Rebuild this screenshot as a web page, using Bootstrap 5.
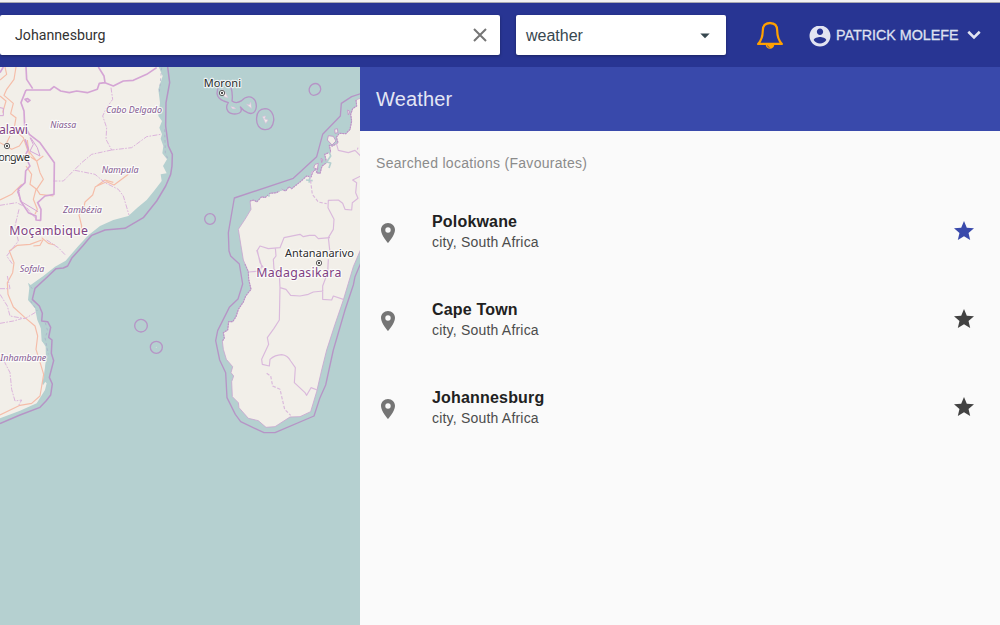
<!DOCTYPE html>
<html lang="en">
<head>
<meta charset="utf-8">
<meta name="viewport" content="width=device-width, initial-scale=1">
<title>Weather</title>
<link href="https://cdn.jsdelivr.net/npm/bootstrap@5.3.0/dist/css/bootstrap.min.css" rel="stylesheet">
<style>
body{font-family:"Liberation Sans",Arial,sans-serif;background:#fafafa;height:625px}
.top-edge{height:3px;background:#f2f2f2;border-bottom:1px solid #a9a9b0}
.app-bar{height:64px;background:#283593}
.search-box,.type-box{height:40px;background:#fff;border-radius:2px;box-shadow:0 1px 3px rgba(0,0,0,.35)}
.search-box{width:500px;padding:0 12px 0 15px}
.search-box input{font:14.2px Roboto,sans-serif;color:#333;background:none;outline:0;padding:0}
.type-box{width:210px;margin-left:16px;padding:1px 16px 0 10px;font-size:16px;color:#37474f}
.bell{margin-left:30px}
.user-menu{margin-left:25px;color:#dfe1f0;font-size:14.3px;line-height:20px;-webkit-text-stroke:.3px}
.user-name{width:124px;padding-left:1px;white-space:nowrap}
.map-pane{width:360px;height:558px;background:#b5d0d0}
.side-head{height:64px;background:#3949ab;color:#e4e6f4;font-size:20px;letter-spacing:.15px;padding-left:16px}
.side-sub{height:56px;padding:8px 0 0 16px;line-height:48px;font-size:14px;letter-spacing:.29px;color:#8b8b8b}
.place{height:88px;padding:0 24px 0 16px}
.place-pin{margin-top:4px}
.place-text{margin-left:32px;padding-top:1px}
.place-name{font-size:16px;line-height:20px;font-weight:700;letter-spacing:.18px;color:#212121}
.place-kind{font-size:14px;line-height:20px;letter-spacing:.2px;color:#4c4c4c}
.map-pane text{font-family:"Noto Sans",sans-serif;paint-order:stroke;stroke:#fff;stroke-opacity:.75;stroke-width:7px;stroke-linejoin:round}
.region{font-style:italic;font-size:27px;fill:#855a91}
.country{font-size:37px;fill:#803f83}
.town{font-size:33px;fill:#2d2d2d}
</style>
</head>
<body class="overflow-hidden">
<div class="top-edge"></div>
<nav class="app-bar d-flex align-items-center">
  <div class="search-box d-flex align-items-center">
    <input class="border-0 flex-grow-1" type="text" value="Johannesburg" aria-label="Search">
    <svg width="16" height="16" viewBox="0 0 16 16" stroke="#757575" stroke-width="2"><path d="M2 2l12 12M14 2L2 14"/></svg>
  </div>
  <div class="type-box d-flex align-items-center justify-content-between">
    <span>weather</span>
    <svg width="10" height="6" viewBox="0 0 10 6"><path d="M.3.5h9.400L5 5.200z" fill="#37474f"/></svg>
  </div>
  <svg class="bell" width="28" height="30" viewBox="0 0 28 30"><path d="M14 3.200c-4.500 0-7.200 2.800-7.200 7.300 0 6.500-1 9.500-4.700 13.400h23.800C22.200 20 21.200 17 21.200 10.500c0-4.500-2.700-7.300-7.200-7.300z" fill="none" stroke="#ffa000" stroke-width="2.200" stroke-linejoin="round"/><path d="M12.200 3.500a1.800 1.800 0 1 1 3.600 0zM9.700 24.500h8.600a4.300 4.300 0 0 1-8.600 0z" fill="#ffa000"/><path d="M11.500 25.500c.2 1.100.9 1.800 2 2" fill="none" stroke="#283593" stroke-width=".7"/></svg>
  <div class="user-menu d-flex align-items-center">
    <svg class="mt-1" width="22" height="22" viewBox="1.500 2.500 21 21" fill="#e2e4f1"><path d="M12 2C6.480 2 2 6.480 2 12s4.480 10 10 10 10-4.480 10-10S17.520 2 12 2zm0 3c1.660 0 3 1.340 3 3s-1.340 3-3 3-3-1.340-3-3 1.340-3 3-3zm0 14.200c-2.500 0-4.710-1.280-6-3.220.03-1.990 4-3.080 6-3.080 1.990 0 5.970 1.090 6 3.080-1.290 1.940-3.500 3.220-6 3.220z"/></svg>
    <span class="user-name ms-1">PATRICK MOLEFE</span>
    <svg class="ms-2" width="14" height="10" viewBox="0 0 13 9" fill="none" stroke="#e2e4f1" stroke-width="2.400"><path d="M1.200 1.500l5.300 5.300 5.300-5.300"/></svg>
  </div>
</nav>
<main class="d-flex">
  <section class="map-pane flex-shrink-0">
    <svg class="d-block" width="360" height="558" viewBox="0 3 1080 1674" fill="none" stroke-linejoin="round">
      <!-- mainland -->
      <path fill="#f2efe9" d="M0 0H475L488 30 475 70 480 110 475 150 486 165 478 185 486 205 482 218 490 240 487 262 501 280 489 300 500 322 482 325 485 345 462 375 440 402 412 425 385 450 340 462 300 480 265 508 235 540 197 584 165 602 130 630 92 657 84 650 88 665 84 702 105 727 112 762 125 792 128 827 137 842 138 882 130 942 140 952 135 972 110 1012 60 1034 0 1057Z"/>
      <path fill="#b5d0d0" d="M121 765l14 15-3 38 8 5-7 10-8-8zM136 890l5 50-12 18-3-8 8-22z"/>
      <g stroke="#f5bda9" stroke-width="3.500">
        <path d="M48 3L42 40 20 70 12 88 40 112 32 143 48 155 42 190 70 215 82 250 110 285 130 270M0 90L18 105 8 140M0 230L35 250 58 240 70 222M82 222L88 270 110 285 120 320 130 340 110 370 90 355 95 325 78 300M110 370L120 385 160 390M108 370L100 400 112 430 105 445M0 402L35 385 65 355M15 3l5 22-20 17M30 210l-10 20M130 520l-10 18-20 2"/>
        <path d="M385 325L342 357 320 347 286 362 278 387 255 408 250 430 237 447 245 480 240 502M125 522L90 535 52 538 28 555 42 590 38 620 22 650 24 685 40 723 75 755 105 780 113 810 108 850 122 895 131 925 120 990 95 1012 60 1018 0 1047M340 349L315 342 290 360M125 515l20 17 20 5"/>
      </g>
      <g stroke="#dcb4dc" stroke-width="3" stroke-dasharray="15 4 5 4">
        <path d="M333 65L338 100 320 125 308 150 320 185 318 220 335 252 395 245 440 212 482 205M335 252L275 265 245 290 220 315 190 345 160 345M225 313L285 325 315 350 355 370 370 390 387 447M0 418L50 410 80 425 105 455M57 430L45 480 55 525 20 570 38 595M0 668H30L22 630M0 685L22 720 30 750 75 758 108 738M140 522L175 545 197 568M12 885L30 920 35 970 45 1005 65 1002 55 1020M0 772L40 765 65 758"/>
      </g>
      <g stroke="#d5a5d5" stroke-width="5">
        <path d="M78 3L80 40 98 68M78 72H150L162 62 182 75 208 80 230 75 262 80 292 70 298 52 315 50 340 60 370 45 400 43 440 25 470 5M295 3L312 30 315 50M78 72L63 110 72 135 74 180 88 205 120 230 163 290 162 385 135 390 113 410 123 430 122 463 108 462 108 450 85 440 62 405 54 370 75 350 77 315 90 300 75 270 85 250 75 220M75 100l8 8 7-5-7-5zM0 20l10-17"/>
        <path stroke-width="3" d="M0 125l10 2v22H0M90 215l10 20-10 20 30 15-8-25-20-30M60 372l-8 5 12 30 50 30"/>
      </g>
      <path stroke="#b694c6" stroke-width="4.500" d="M503 3L509 50 498 110 497 180 505 240 517 265 516 300 512 325 497 360 470 405 430 455 375 487 315 492 275 508 248 540 215 577 203 600 190 606 168 608 145 630 105 667 97 700 118 720 127 742 125 765 143 767 152 784 146 814 156 822 154 862 161 884 148 934 157 954 152 987 138 1005 120 1024 60 1047 0 1073"/>
      <path stroke="#a9a9c9" stroke-width="2" stroke-dasharray="8 8" d="M485 5L478 80M494 190l2 70 8 20M92 662l8 10M92 705l20 30M136 770l7 25-8 20 10 50"/>

      <!-- island -->
      <g transform="translate(540 0)">
        <path fill="#f2efe9" stroke="#c9a6d0" stroke-width="2.500" d="M550 85L540 97 528 102 530 120 518 128 512 145 515 165 510 190 498 203 478 202 469 214 474 230 458 240 448 238 452 258 434 265 440 290 426 300 420 322 409 320 414 305 398 318 393 333 380 330 360 348 335 368 327 362 317 375 305 370 290 380 270 382 255 395 245 392 230 408 222 402 210 405 213 430 195 460 175 490 183 540 190 582 205 617 206 640 213 670 197 690 190 708 175 730 168 752 158 767 146 767 143 792 130 800 133 817 127 825 130 850 139 880 158 902 153 920 161 930 155 947 157 992 175 1010 177 1025 205 1057 235 1064 258 1084 285 1082 330 1053 360 1052 392 1037 410 977 425 912 440 852 465 775 490 702 505 652 520 602 550 532Z"/>
        <path stroke="#bb93c6" stroke-width="3.500" stroke-dasharray="5 3" d="M528 102L530 120 518 128 512 145 515 165 510 190 498 203 478 202 469 214 474 230 458 240 448 238 452 258 434 265 440 290 426 300 420 322 409 320 414 305 398 318 393 333 380 330 360 348 335 368 327 362 317 375 305 370 290 380 270 382 255 395 245 392 230 408 222 402 210 405M195 595L205 617 206 640 213 670 197 690 190 708 175 730 168 752 158 767 146 767 143 792 130 800 133 817 127 825"/>
        <path fill="#f2efe9" stroke="#c39ccb" stroke-width="3" d="M445 209l15 2 8 14-12 12-14-15zM464 190l8-2 2 12-9 2zM405 295l10-3-3 18-11-5zM423 277l6 4-4 9zM503 132l7 5-5 10z"/>
        <path stroke="#b5d0d0" stroke-width="5" d="M445 250l7 20-12 18 12 3-5 15M378 342l20 2M390 332l-3 18M295 374l12-3M265 384l3 8"/>
        <path stroke="#dab9dc" stroke-width="3.500" d="M469 232L475 253 505 260 525 253 542 270M542 330L518 342 530 350 527 380 534 397 517 410 515 432 495 430 488 412 475 402 445 403 444 425 462 460 460 490 445 515 450 560M450 515L415 518 405 508 388 508 370 512 360 505 312 515 300 545 265 548 240 540 232 553 240 590 250 605M286 545L288 570 280 580 282 610 298 625 300 665 318 670 332 688 360 690 385 685 400 678 430 675M445 580L443 620 428 660V700L455 702 460 690 490 700M300 665L298 762 282 787 262 815 266 835 245 880 247 895 268 900 270 880Q285 867 305 866 323 868 332 885L346 905 343 950 375 980 380 988 393 965 412 972M230 552L245 600 240 615 206 618M534 245l-2 6"/>
        <path stroke="#dab9dc" stroke-width="3.500" stroke-dasharray="10 5" d="M398 315L390 330 397 385 415 408 440 413M260 922L272 930 278 960 300 970 314 1030 332 1048"/>
        <path stroke="#b694c6" stroke-width="4" d="M542 83L515 92 484 112 481 150 428 205 410 272 340 337 163 396 145 500 147 555 152 570 178 594 188 654 174 699 148 724 113 794 107 824 119 882 137 920 141 995 166 1045 182 1067 252 1100H285L402 1050 420 995 437 957 460 852 495 732 520 657 525 632 542 592"/>
        <!-- archipelago -->
        <path stroke="#b694c6" stroke-width="4" d="M114 62L111 82Q113 98 131 105L145 110Q136 122 143 134C148 145 168 146 178 141Q188 135 181 123C195 141 215 148 224 137Q233 125 226 105C215 85 195 92 185 104Q168 115 156 105Q159 87 153 63M255 128C272 128 283 146 281 164 279 180 270 192 254 191 238 190 228 175 230 155 231 138 241 129 255 128zM397 55C411 48 423 57 422 71 419 87 396 94 390 81 385 72 388 60 397 55z"/>
        <path fill="#f2efe9" stroke="#dfc0df" stroke-width="2" d="M127 70l6 5 11 20-11-3zM153 122l5 6 9 0-5-4zM200 115l14 12-2-18-4 8zM248 152l9 20 7-10-10-3 2-9z"/>
        <circle cx="90" cy="459" r="16" stroke="#b694c6" stroke-width="4"/>
      </g>
      <g stroke="#b694c6" stroke-width="4"><circle cx="423" cy="779" r="19"/><circle cx="469" cy="844" r="18"/></g>
      <circle cx="469" cy="844" r="2" fill="#d7dadd"/>

      <g fill="#fff" stroke="#444" stroke-width="2.500"><circle cx="21" cy="240" r="8"/><circle cx="666" cy="81" r="8"/><circle cx="957" cy="591" r="8"/></g>
      <g fill="#444"><circle cx="21" cy="240" r="3.500"/><circle cx="666" cy="81" r="3.500"/><circle cx="957" cy="591" r="3.500"/></g>
      <text class="region" x="318" y="142" textLength="168" lengthAdjust="spacingAndGlyphs">Cabo Delgado</text>
      <text class="region" x="151" y="187" textLength="78" lengthAdjust="spacingAndGlyphs">Niassa</text>
      <text class="region" x="305" y="321" textLength="111" lengthAdjust="spacingAndGlyphs">Nampula</text>
      <text class="region" x="189" y="441" textLength="117" lengthAdjust="spacingAndGlyphs">Zambézia</text>
      <text class="region" x="59" y="618" textLength="74" lengthAdjust="spacingAndGlyphs">Sofala</text>
      <text class="region" x="1" y="886" textLength="138" lengthAdjust="spacingAndGlyphs">Inhambane</text>
      <text class="country" x="-3" y="204" textLength="87">alawi</text>
      <text class="country" x="28" y="507" textLength="236">Moçambique</text>
      <text class="country" x="769" y="633" textLength="255">Madagasikara</text>
      <text class="town" x="-5" y="284" textLength="95">ongwe</text>
      <text class="town" x="611" y="62" textLength="112">Moroni</text>
      <text class="town" x="855" y="573" textLength="207">Antananarivo</text>
    </svg>
  </section>
  <section class="flex-grow-1">
    <header class="side-head d-flex align-items-center">Weather</header>
    <div class="side-sub">Searched locations (Favourates)</div>
    <div class="place d-flex align-items-center">
      <svg class="place-pin" width="24" height="24" viewBox="0 0 24 24" fill="#757575"><path d="M12 2C8.130 2 5 5.130 5 9c0 5.250 7 13 7 13s7-7.750 7-13c0-3.870-3.130-7-7-7zm0 9.700a2.700 2.700 0 1 1 0-5.400 2.700 2.700 0 0 1 0 5.400z"/></svg>
      <div class="place-text flex-grow-1"><div class="place-name">Polokwane</div><div class="place-kind">city, South Africa</div></div>
      <svg width="24" height="24" viewBox="0 0 24 24" fill="#3949ab"><path d="M12 17.270L18.180 21l-1.640-7.030L22 9.240l-7.190-.61L12 2 9.190 8.630 2 9.240l5.460 4.730L5.820 21z"/></svg>
    </div>
    <div class="place d-flex align-items-center">
      <svg class="place-pin" width="24" height="24" viewBox="0 0 24 24" fill="#757575"><path d="M12 2C8.130 2 5 5.130 5 9c0 5.250 7 13 7 13s7-7.750 7-13c0-3.870-3.130-7-7-7zm0 9.700a2.700 2.700 0 1 1 0-5.400 2.700 2.700 0 0 1 0 5.400z"/></svg>
      <div class="place-text flex-grow-1"><div class="place-name">Cape Town</div><div class="place-kind">city, South Africa</div></div>
      <svg width="24" height="24" viewBox="0 0 24 24" fill="#424242"><path d="M12 17.270L18.180 21l-1.640-7.030L22 9.240l-7.190-.61L12 2 9.190 8.630 2 9.240l5.460 4.730L5.820 21z"/></svg>
    </div>
    <div class="place d-flex align-items-center">
      <svg class="place-pin" width="24" height="24" viewBox="0 0 24 24" fill="#757575"><path d="M12 2C8.130 2 5 5.130 5 9c0 5.250 7 13 7 13s7-7.750 7-13c0-3.870-3.130-7-7-7zm0 9.700a2.700 2.700 0 1 1 0-5.400 2.700 2.700 0 0 1 0 5.400z"/></svg>
      <div class="place-text flex-grow-1"><div class="place-name">Johannesburg</div><div class="place-kind">city, South Africa</div></div>
      <svg width="24" height="24" viewBox="0 0 24 24" fill="#424242"><path d="M12 17.270L18.180 21l-1.640-7.030L22 9.240l-7.190-.61L12 2 9.190 8.630 2 9.240l5.460 4.730L5.820 21z"/></svg>
    </div>
  </section>
</main>
<script src="https://cdn.jsdelivr.net/npm/bootstrap@5.3.0/dist/js/bootstrap.bundle.min.js"></script>
</body>
</html>
